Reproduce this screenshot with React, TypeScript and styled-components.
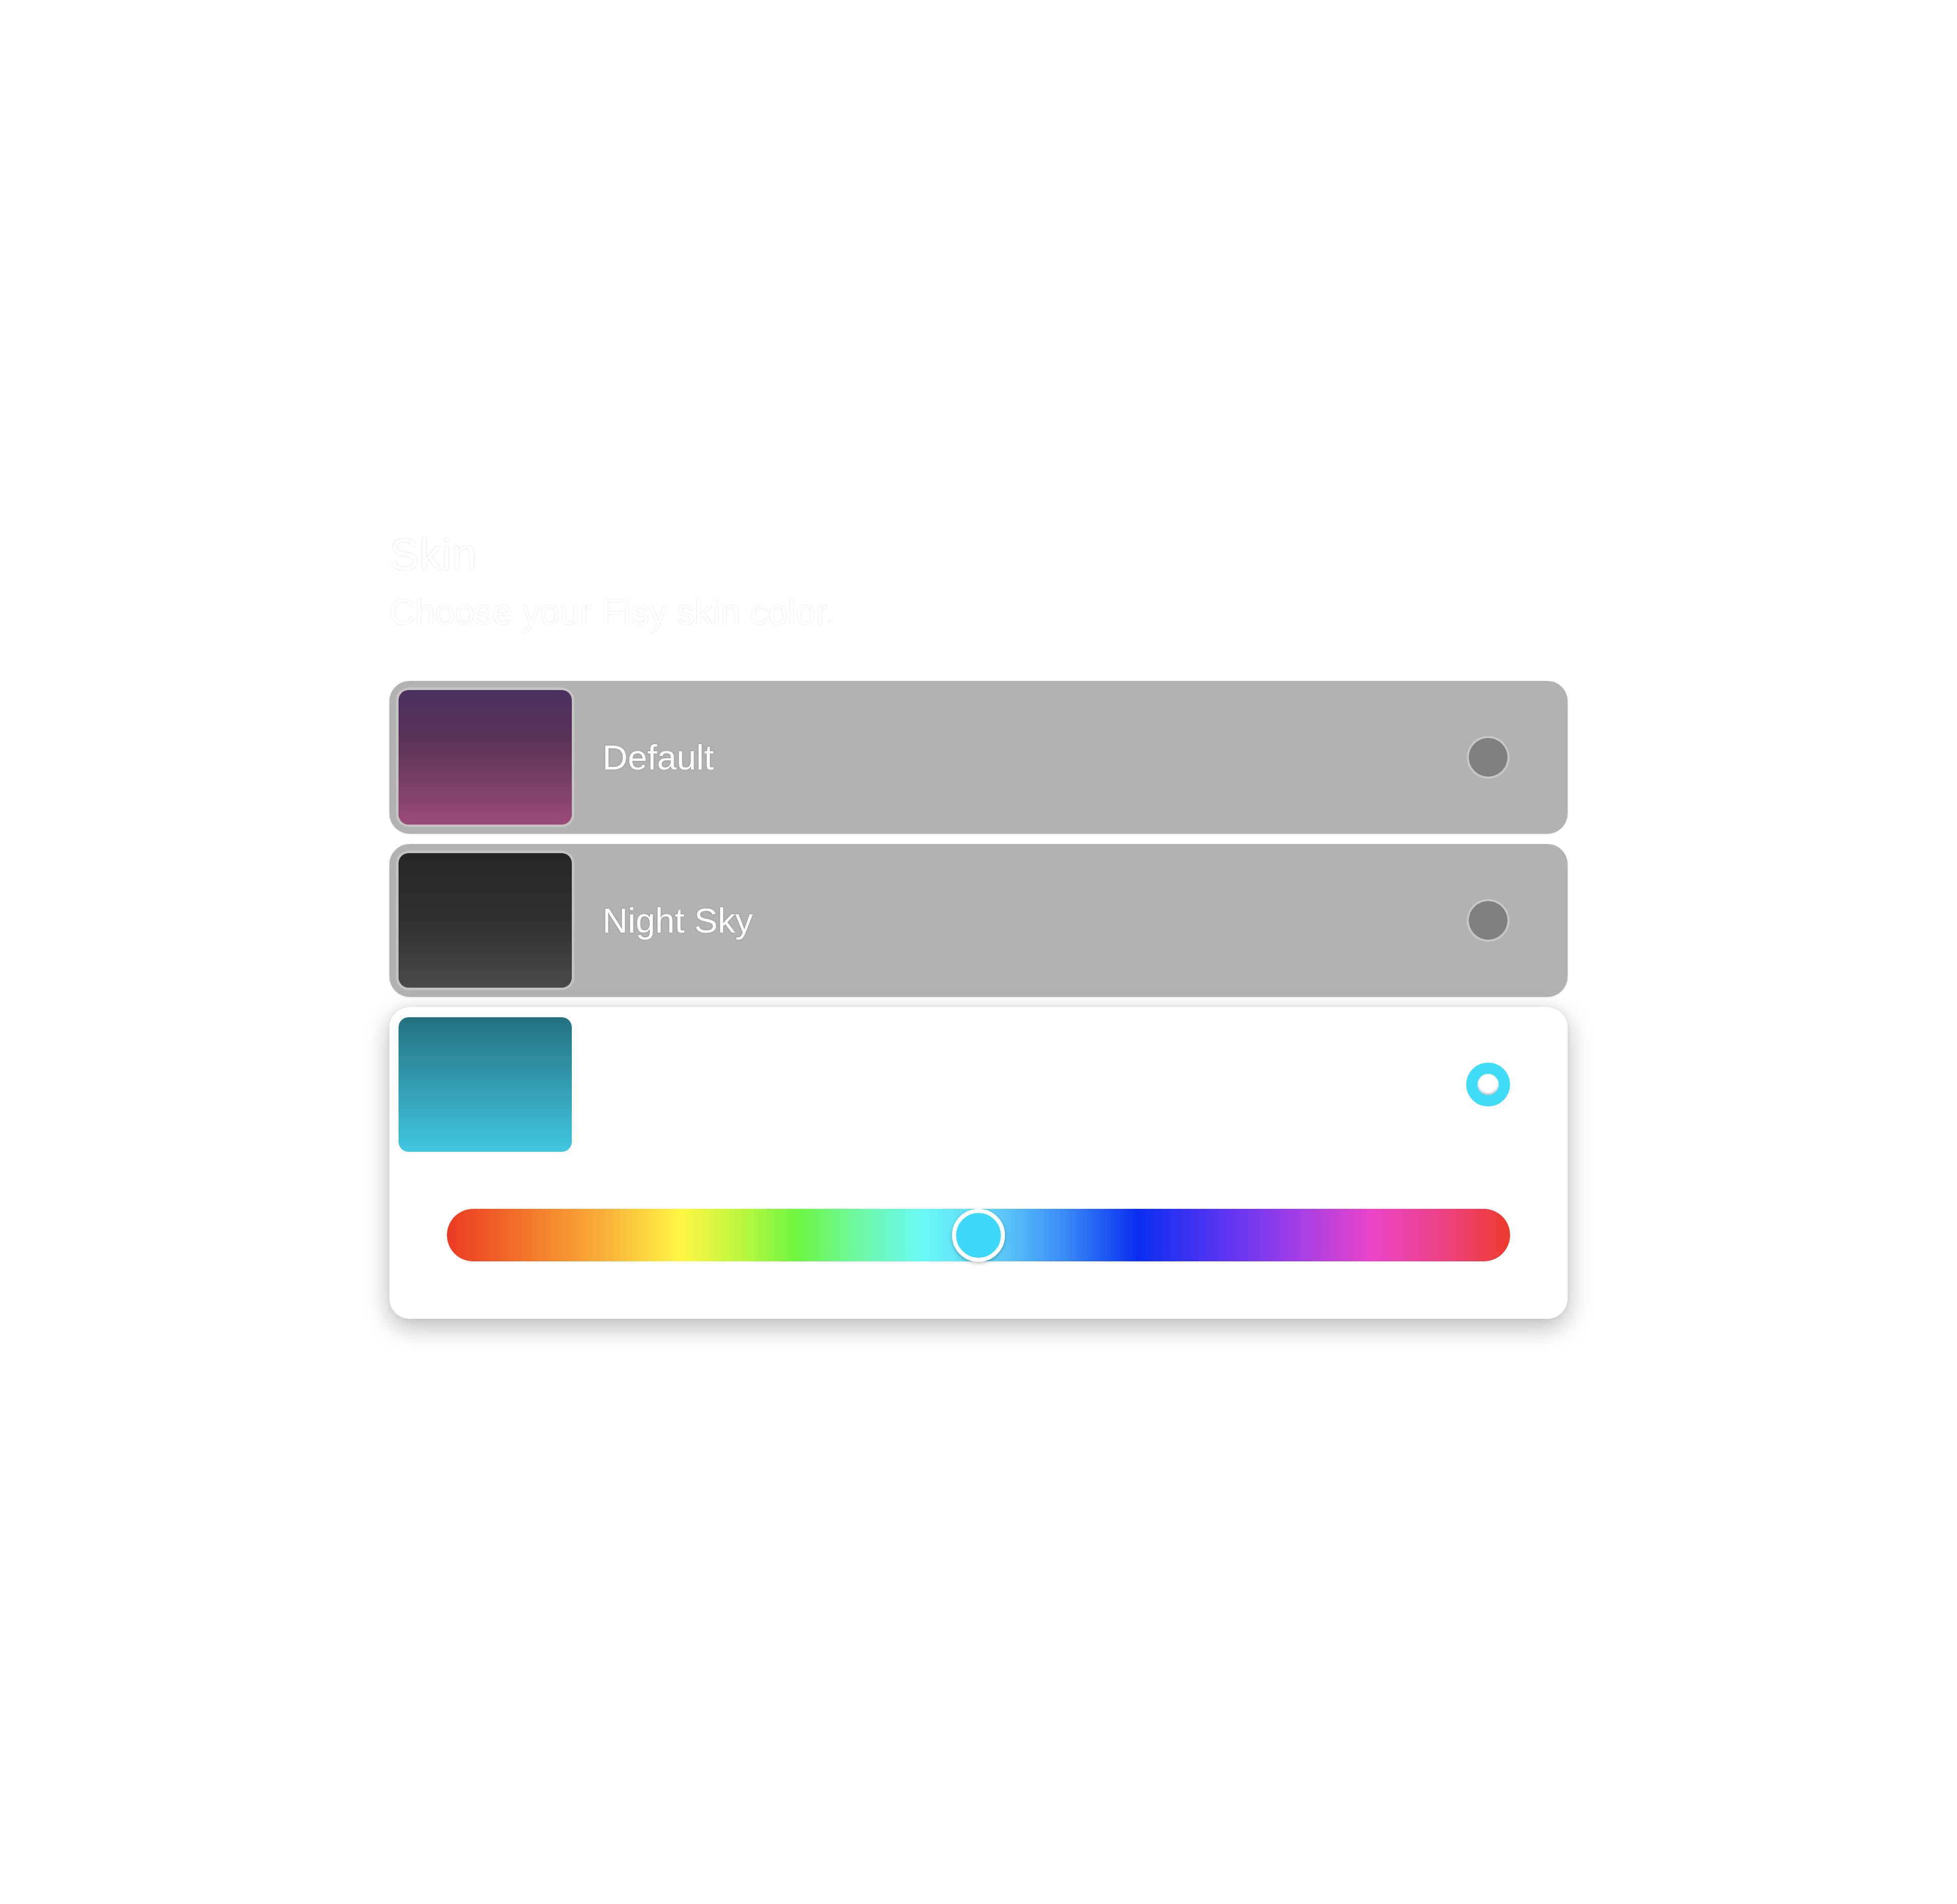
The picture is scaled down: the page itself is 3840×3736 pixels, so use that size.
import React, { useState } from "react";
import styled, { createGlobalStyle } from "styled-components";

const GlobalStyle = createGlobalStyle`
  html, body {
    margin: 0;
    padding: 0;
    background: #ffffff;
  }
  body {
    min-height: 3736px;
    font-family: "Liberation Sans", Arial, Helvetica, sans-serif;
  }
`;

type Skin = {
  id: string;
  name?: string;
  gradient: string;
  custom?: boolean;
};

const skins: Skin[] = [
  {
    id: "default",
    name: "Default",
    gradient: "linear-gradient(180deg, #4b305f 0%, #5b3358 38%, #7a3f66 70%, #9c4b78 100%)",
  },
  {
    id: "night",
    name: "Night Sky",
    gradient: "linear-gradient(180deg, #262626 0%, #303030 50%, #4a4a4a 100%)",
  },
  {
    id: "custom",
    gradient: "linear-gradient(180deg, #237180 0%, #3197ab 45%, #40c6e2 100%)",
    custom: true,
  },
];

const Page = styled.main`
  display: flex;
  justify-content: center;
  padding-top: 1037px;
`;

const Panel = styled.section`
  width: 2312px;
  display: flex;
  flex-direction: column;
`;

const Title = styled.h2`
  margin: 0;
  font-size: 88px;
  font-weight: 400;
  line-height: normal;
  color: #ffffff;
  text-shadow: 0 0 2px rgba(0, 0, 0, 0.22);
`;

const Subtitle = styled.p`
  margin: 22px 0 0;
  font-size: 70px;
  line-height: normal;
  color: #ffffff;
  text-shadow: 0 0 2px rgba(0, 0, 0, 0.2);
`;

const OptionList = styled.div`
  margin-top: 95px;
  display: flex;
  flex-direction: column;
  gap: 20px;
`;

const Card = styled.div<{ $selected: boolean }>`
  display: flex;
  flex-direction: column;
  border-radius: 40px;
  padding: ${(p) => (p.$selected ? "20px 18px 113px" : "18px")};
  background: ${(p) => (p.$selected ? "#ffffff" : "#b2b2b2")};
  box-shadow: ${(p) =>
    p.$selected
      ? "0 16px 50px rgba(0, 0, 0, 0.28), 0 0 8px rgba(0, 0, 0, 0.07)"
      : "0 1px 3px rgba(0, 0, 0, 0.12)"};
  cursor: pointer;
`;

const Row = styled.div`
  display: flex;
  align-items: center;
`;

const Swatch = styled.div<{ $selected: boolean }>`
  width: 340px;
  height: 264px;
  flex-shrink: 0;
  border-radius: 20px;
  box-shadow: ${(p) =>
    p.$selected ? "none" : "0 0 0 5px rgba(255, 255, 255, 0.22)"};
`;

const Label = styled.span`
  margin-left: 60px;
  font-size: 69px;
  color: #ffffff;
  text-shadow: 0 0 3px rgba(0, 0, 0, 0.3);
`;

const Spacer = styled.div`
  flex: 1;
`;

const RadioSlot = styled.div`
  width: 86px;
  height: 86px;
  margin-right: 95px;
  display: flex;
  align-items: center;
  justify-content: center;
`;

const RadioDot = styled.span`
  width: 76px;
  height: 76px;
  border-radius: 50%;
  background: #808080;
  box-shadow: 0 0 0 4px rgba(255, 255, 255, 0.28);
`;

const RadioRing = styled.span`
  box-sizing: border-box;
  width: 86px;
  height: 86px;
  border-radius: 50%;
  border: 22px solid #3fdcf8;
  background: #ffffff;
  box-shadow: inset 0 -3px 4px rgba(0, 70, 90, 0.35);
`;

const SliderArea = styled.div`
  margin: 112px 95px 0;
`;

const Track = styled.div`
  position: relative;
  height: 103px;
  border-radius: 52px;
  background: linear-gradient(
    90deg,
    #ea3a22 0%,
    #f37a2a 8%,
    #f9b23a 15%,
    #fff644 22%,
    #b8f63e 28%,
    #6cf640 33%,
    #6ef8a8 39%,
    #68f8f6 45%,
    #5ccaf8 52%,
    #3a8cf6 58%,
    #0a2ef0 65%,
    #5a34f2 73%,
    #a23ee6 80%,
    #ea44c8 87%,
    #ec4280 94%,
    #ee3a2c 100%
  );
`;

const Thumb = styled.span`
  position: absolute;
  top: 50%;
  box-sizing: border-box;
  width: 104px;
  height: 104px;
  border-radius: 50%;
  border: 8px solid #ffffff;
  background: #3ed8fa;
  box-shadow: 0 3px 6px rgba(0, 0, 0, 0.25);
  transform: translate(-50%, -50%);
`;

export default function App() {
  const [selected, setSelected] = useState("custom");
  const [hue] = useState(0.5);

  return (
    <>
      <GlobalStyle />
      <Page>
        <Panel>
          <Title>Skin</Title>
          <Subtitle>Choose your Fisy skin color.</Subtitle>
          <OptionList>
            {skins.map((skin) => {
              const isSelected = skin.id === selected;
              return (
                <Card
                  key={skin.id}
                  $selected={isSelected}
                  onClick={() => setSelected(skin.id)}
                >
                  <Row>
                    <Swatch
                      $selected={isSelected}
                      style={{ background: skin.gradient }}
                    />
                    {skin.name && <Label>{skin.name}</Label>}
                    <Spacer />
                    <RadioSlot>{isSelected ? <RadioRing /> : <RadioDot />}</RadioSlot>
                  </Row>
                  {skin.custom && isSelected && (
                    <SliderArea>
                      <Track>
                        <Thumb style={{ left: `${hue * 100}%` }} />
                      </Track>
                    </SliderArea>
                  )}
                </Card>
              );
            })}
          </OptionList>
        </Panel>
      </Page>
    </>
  );
}
